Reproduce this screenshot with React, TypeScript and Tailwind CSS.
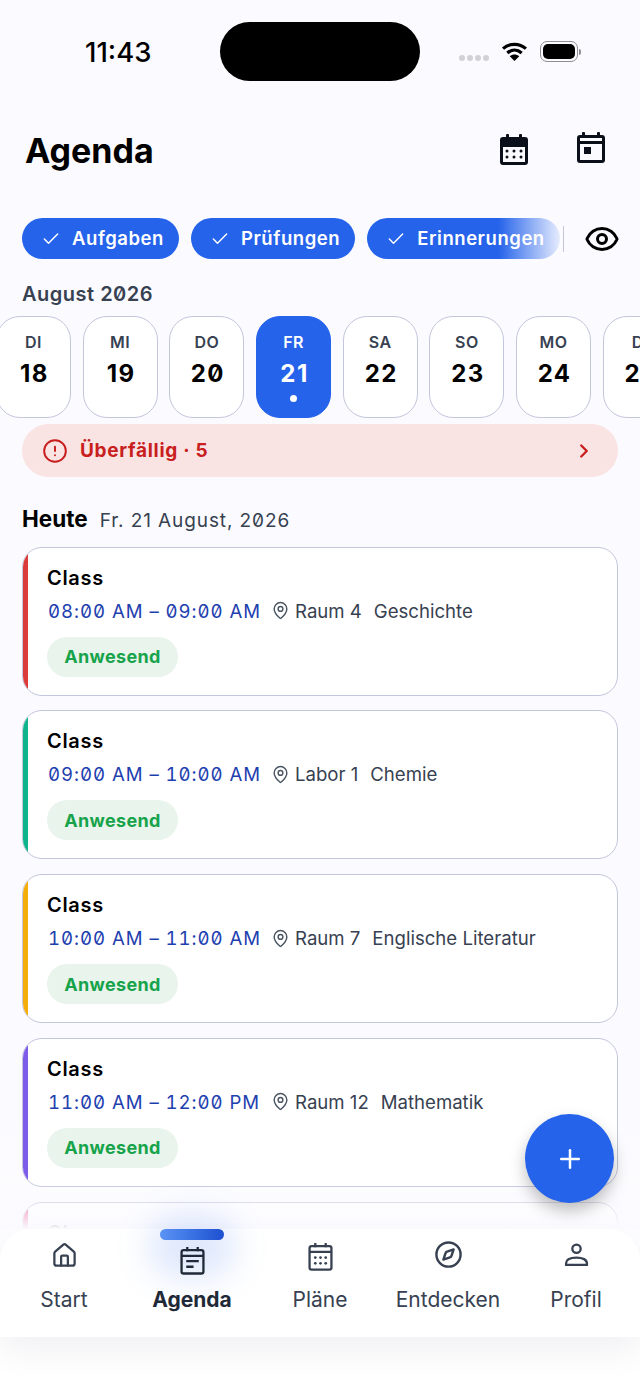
import { Home, Compass, Plus, Check, Eye, ChevronRight, CircleAlert, MapPin } from 'lucide-react';

const days = [
  { name: 'DI', num: '18' },
  { name: 'MI', num: '19' },
  { name: 'DO', num: '20' },
  { name: 'FR', num: '21', active: true },
  { name: 'SA', num: '22' },
  { name: 'SO', num: '23' },
  { name: 'MO', num: '24' },
  { name: 'DI', num: '25' },
];

const classes = [
  { time: '08:00 AM – 09:00 AM', room: 'Raum 4', subject: 'Geschichte', bar: 'bg-[#dc3b3b]' },
  { time: '09:00 AM – 10:00 AM', room: 'Labor 1', subject: 'Chemie', bar: 'bg-[#10b48c]' },
  { time: '10:00 AM – 11:00 AM', room: 'Raum 7', subject: 'Englische Literatur', bar: 'bg-[#f5ad0b]' },
  { time: '11:00 AM – 12:00 PM', room: 'Raum 12', subject: 'Mathematik', bar: 'bg-[#7c5ce8]' },
];

function CalendarIcon({ className }: { className?: string }) {
  return (
    <svg viewBox="0 0 30 32" className={className} fill="currentColor">
      <rect x="7" y="1" width="3" height="6" rx="1" />
      <rect x="20" y="1" width="3" height="6" rx="1" />
      <path d="M4 4h22a3 3 0 0 1 3 3v22a3 3 0 0 1-3 3H4a3 3 0 0 1-3-3V7a3 3 0 0 1 3-3Zm0 10v15h22V14H4Z" fillRule="evenodd" />
      {[8, 15, 22].map((x) => (
        <g key={x}>
          <circle cx={x} cy="18" r="1.5" />
          <circle cx={x} cy="24" r="1.5" />
        </g>
      ))}
    </svg>
  );
}

function DayIcon({ className }: { className?: string }) {
  return (
    <svg viewBox="0 0 30 32" className={className} fill="currentColor">
      <rect x="6" y="0" width="3" height="6" rx="1" />
      <rect x="21" y="0" width="3" height="6" rx="1" />
      <path d="M4 3h22a3 3 0 0 1 3 3v22a3 3 0 0 1-3 3H4a3 3 0 0 1-3-3V6a3 3 0 0 1 3-3Zm0 3v3h22V6H4Zm0 6v16h22V12H4Z" fillRule="evenodd" />
      <rect x="8" y="15" width="7" height="7" />
    </svg>
  );
}

function AgendaIcon({ className }: { className?: string }) {
  return (
    <svg viewBox="0 0 24 28" className={className} fill="none" stroke="currentColor" strokeWidth="2.2">
      <rect x="1.5" y="4" width="21" height="22.5" rx="2" />
      <path d="M1.5 9.5h21M7 1v4M17 1v4M6 14.5h12M6 20h7" />
    </svg>
  );
}

function PlanIcon({ className }: { className?: string }) {
  return (
    <svg viewBox="0 0 24 28" className={className} fill="none" stroke="currentColor" strokeWidth="2.2">
      <rect x="1.5" y="4" width="21" height="22.5" rx="2" />
      <path d="M1.5 9.5h21M7 1v4M17 1v4" />
      {[7, 12, 17].map((x) => (
        <g key={x} fill="currentColor" stroke="none">
          <circle cx={x} cy="15" r="1.3" />
          <circle cx={x} cy="20.5" r="1.3" />
        </g>
      ))}
    </svg>
  );
}

function ProfileIcon({ className }: { className?: string }) {
  return (
    <svg viewBox="0 0 24 24" className={className} fill="none" stroke="currentColor" strokeWidth="2.2">
      <circle cx="12" cy="6.5" r="4" />
      <path d="M2 22v-1.5C2 17 6 15 12 15s10 2 10 5.5V22H2Z" />
    </svg>
  );
}

function Chip({ label, fade }: { label: string; fade?: boolean }) {
  return (
    <div
      className={`flex h-[41px] shrink-0 items-center rounded-full pl-[19px] text-[18.5px] font-semibold tracking-[0.55px] text-white ${
        fade ? 'w-[193px] bg-gradient-to-r from-[#2563eb] from-[68%] to-[#2563eb]/10' : 'bg-[#2563eb] pr-[15px]'
      }`}
    >
      <Check size={20} strokeWidth={1.8} className="mr-[11px]" />
      {label}
    </div>
  );
}

function ClassCard({ time, room, subject, bar }: (typeof classes)[number]) {
  return (
    <div className="flex h-[149px] shrink-0 overflow-hidden rounded-[20px] border border-[#c3c6dc] bg-white">
      <div className={`w-[5px] shrink-0 ${bar}`} />
      <div className="pl-[19px] pt-[17px]">
        <div className="text-[20px] font-semibold leading-[26px] tracking-[0.7px] text-black">Class</div>
        <div className="mt-[6px] flex items-center text-[18.6px] leading-[28px] text-[#374151]">
          <span className="w-[211px] whitespace-nowrap pl-[1px] tracking-[0.95px] text-[#1e40af] [font-variant-numeric:tabular-nums_slashed-zero]">{time}</span>
          <MapPin size={19} strokeWidth={1.8} className="ml-[13px] mr-[5px] text-[#4b5563]" />
          <span>{room}</span>
          <span className="ml-[12px]">{subject}</span>
        </div>
        <div className="mt-[12px] flex h-[40px] w-[131px] items-center justify-center rounded-full bg-[#e8f4ec] text-[18px] font-bold tracking-[0.35px] text-[#16a34a]">
          Anwesend
        </div>
      </div>
    </div>
  );
}

export default function App() {
  return (
    <div className="relative h-[1391px] w-[640px] overflow-hidden bg-gradient-to-b from-[#fbfbff] from-[80%] to-white font-['Inter',sans-serif] [font-variant-numeric:slashed-zero]">
      {/* Status bar */}
      <div className="flex h-[81px] items-start pt-[22px]">
        <div className="w-[220px] pl-[85px] pt-[12px] text-[27.5px] font-medium leading-[36px] text-black">11:43</div>
        <div className="h-[59px] w-[200px] rounded-full bg-black" />
        <div className="ml-[39px] flex items-center pt-[19px]">
          <div className="flex gap-[2px] pt-[13px]">
            <span className="h-[6px] w-[6px] rounded-full bg-[#d1d1d6]" />
            <span className="h-[6px] w-[6px] rounded-full bg-[#d1d1d6]" />
            <span className="h-[6px] w-[6px] rounded-full bg-[#d1d1d6]" />
            <span className="h-[6px] w-[6px] rounded-full bg-[#d1d1d6]" />
          </div>
          <svg viewBox="0 0 28 22" className="ml-[12px] h-[21px] w-[27px]" fill="none" stroke="#000" strokeWidth="3.4">
            <path d="M2 8c7-6 17-6 24 0M6.5 12.5c4.5-4 10.5-4 15 0" />
            <path d="M14 21l-5-5c3-2.4 7-2.4 10 0l-5 5Z" fill="#000" stroke="none" />
          </svg>
          <div className="ml-[12px] flex items-center">
            <div className="h-[21px] w-[38px] rounded-[7px] border border-[#8e8e93] p-[2px]">
              <div className="h-full w-full rounded-[5px] bg-black" />
            </div>
            <div className="ml-[1px] h-[6px] w-[2px] rounded-r bg-[#8e8e93]" />
          </div>
        </div>
      </div>

      {/* Header */}
      <div className="mt-[50px] flex h-[40px] items-center pl-[25px]">
        <h1 className="mb-[2px] text-[34px] font-bold text-black">Agenda</h1>
        <div className="ml-auto flex items-center gap-[47px] pr-[34px] text-[#0b0f1a]">
          <CalendarIcon className="mb-[4px] h-[32px] w-[30px]" />
          <DayIcon className="mb-[6px] h-[32px] w-[30px]" />
        </div>
      </div>

      {/* Filter chips */}
      <div className="mt-[47px] flex h-[41px] items-center gap-[12px] pl-[22px]">
        <Chip label="Aufgaben" />
        <Chip label="Prüfungen" />
        <Chip label="Erinnerungen" fade />
        <div className="-ml-[9px] h-[26px] w-px bg-[#c3c6dc]" />
        <Eye size={36} strokeWidth={2} className="ml-[8px] text-black" />
      </div>

      {/* Week strip */}
      <div className="mt-[23px] pl-[22px] text-[20px] font-semibold leading-[24px] tracking-[0.5px] text-[#374151]">August 2026</div>
      <div className="-ml-[4px] mt-[10px] flex gap-[11.7px]">
        {days.map((d, i) => (
          <div
            key={i}
            className={`flex h-[102px] w-[75px] shrink-0 flex-col items-center rounded-[24px] border pt-[15px] ${
              d.active ? 'border-[#2563eb] bg-[#2563eb] text-white' : 'border-[#c3c6dc] bg-white'
            }`}
          >
            <span className={`text-[16px] font-semibold leading-[20px] tracking-[0.5px] ${d.active ? 'text-white' : 'text-[#374151]'}`}>{d.name}</span>
            <span className={`mt-[7px] pl-[2px] text-[24px] font-bold leading-[30px] tracking-[1.5px] ${d.active ? 'text-white' : 'text-black'}`}>{d.num}</span>
            {d.active && <span className="mt-[6px] h-[7px] w-[7px] rounded-full bg-white" />}
          </div>
        ))}
      </div>

      {/* Overdue banner */}
      <div className="mx-[22px] mt-[6px] flex h-[53px] items-center rounded-full bg-[#f9e3e3] pl-[20px] pr-[23px] text-[#c81e1e]">
        <CircleAlert size={26} strokeWidth={1.8} />
        <span className="ml-[12px] pt-[1px] text-[19px] font-bold tracking-[0.7px]">Überfällig · 5</span>
        <ChevronRight size={22} strokeWidth={2.6} className="ml-auto" />
      </div>

      {/* Today */}
      <div className="mt-[27px] flex items-baseline pl-[22px]">
        <span className="text-[22.5px] font-bold leading-[30px] text-black">Heute</span>
        <span className="ml-[12px] text-[19px] tracking-[0.9px] text-[#374151]">Fr. 21 August, 2026</span>
      </div>
      <div className="mx-[22px] mt-[11px] flex h-[682px] flex-col gap-[14.8px] overflow-hidden">
        {classes.map((c) => (
          <ClassCard key={c.time} {...c} />
        ))}
        <div className="flex h-[149px] shrink-0 overflow-hidden rounded-[20px] border border-[#c3c6dc] bg-white">
          <div className="w-[5px] shrink-0 bg-[#ec4899]" />
          <div className="pl-[19px] pt-[17px] text-[20px] font-semibold leading-[26px] tracking-[0.7px] text-black">Class</div>
        </div>
      </div>

      {/* Fade above the navigation */}
      <div className="absolute inset-x-0 top-[1180px] h-[49px] bg-gradient-to-b from-[#fbfbff]/0 to-[#fbfbff]" />

      {/* Add button */}
      <div className="absolute left-[525px] top-[1114px] flex h-[89px] w-[89px] items-center justify-center rounded-full bg-[#2563eb] text-white shadow-[0_8px_16px_rgba(0,0,0,0.25)]">
        <Plus size={30} strokeWidth={2} />
      </div>

      {/* Bottom navigation */}
      <div className="absolute left-0 top-[1229px] grid h-[108px] w-full grid-cols-5 rounded-t-[32px] bg-white text-[#374151] shadow-[0_16px_32px_rgba(15,23,42,0.05)]">
        <div className="flex flex-col items-center pt-[13px]">
          <Home size={27} strokeWidth={2} />
          <span className="mt-[18px] text-[21px] leading-[26px]">Start</span>
        </div>
        <div className="relative flex flex-col items-center pt-[15px] text-[#1f2937]">
          <div className="absolute left-1/2 top-[-14px] h-[64px] w-[88px] -translate-x-1/2 rounded-full bg-[#2563eb]/15 blur-[16px]" />
          <div className="absolute left-1/2 top-0 h-[11px] w-[64px] -translate-x-1/2 rounded-full bg-gradient-to-r from-[#5b93f5] to-[#1d4fd0]" />
          <AgendaIcon className="relative h-[33px] w-[25px]" />
          <span className="relative mt-[10px] text-[21px] font-bold leading-[26px]">Agenda</span>
        </div>
        <div className="flex flex-col items-center pt-[11px]">
          <PlanIcon className="h-[33px] w-[25px]" />
          <span className="mt-[14px] text-[21px] leading-[26px]">Pläne</span>
        </div>
        <div className="flex flex-col items-center pt-[11px]">
          <Compass size={29} strokeWidth={2} />
          <span className="mt-[18px] text-[21px] leading-[26px]">Entdecken</span>
        </div>
        <div className="flex flex-col items-center pt-[12px]">
          <ProfileIcon className="h-[27px] w-[25px]" />
          <span className="mt-[19px] text-[21px] leading-[26px]">Profil</span>
        </div>
      </div>
    </div>
  );
}
